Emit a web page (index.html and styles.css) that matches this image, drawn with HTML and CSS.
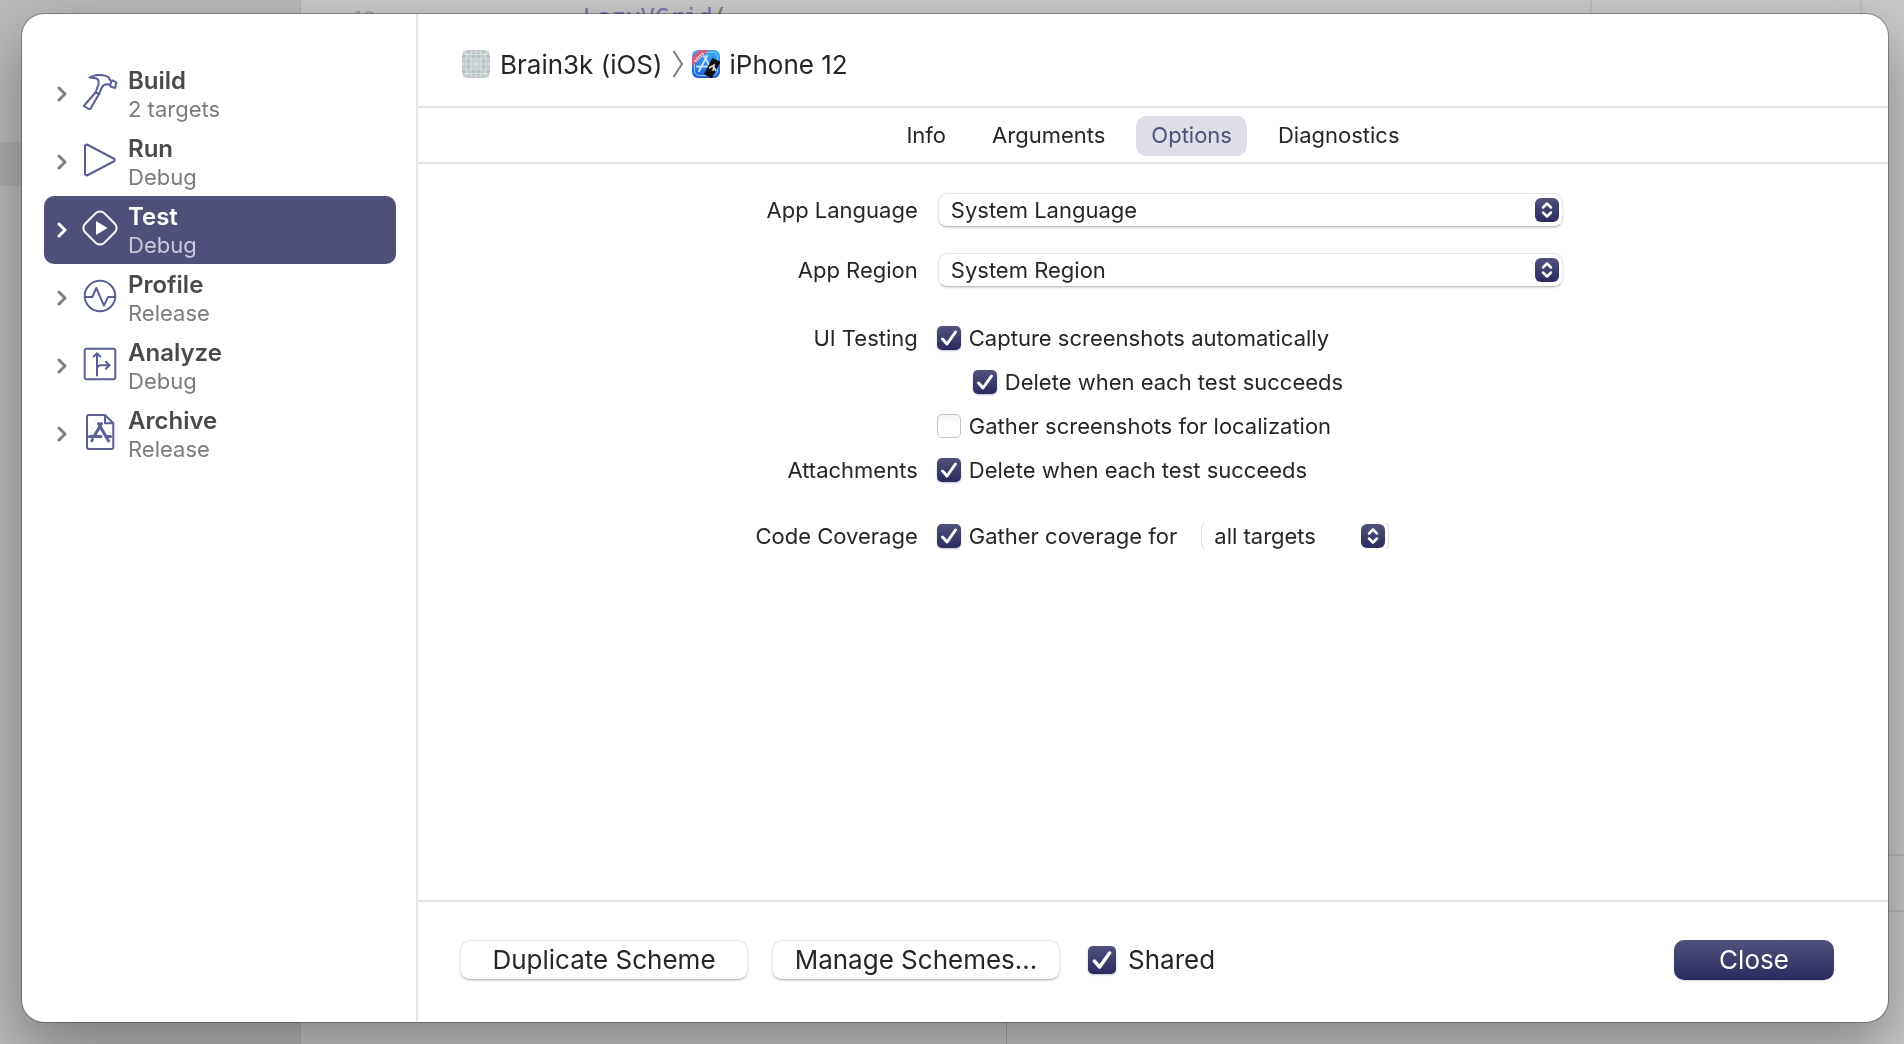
FILE: index.html
```html
<!DOCTYPE html>
<html lang="en">
<head>
<meta charset="utf-8">
<title>Edit Scheme</title>
<link rel="stylesheet" href="styles.css">
</head>
<body>
<div class="backdrop" aria-hidden="true">
  <div class="navigator"><div class="navigator-row"></div></div>
  <div class="editor"><span class="line-number">18</span><code class="code-line">LazyVGrid<span class="paren">(</span></code></div>
  <div class="gutter"></div>
  <div class="inspector"></div>
  <div class="debug-split"></div>
</div>

<main class="dialog">
  <nav class="sidebar" aria-label="Scheme actions">
    <a class="action" href="#build">
      <svg class="chevron" viewBox="0 0 12 16"><path d="M3 2l6 6-6 6"/></svg>
      <svg class="icon" viewBox="0 0 36 36"><path d="M7.5 3.5C13 0 22 0 27 3.5L27.500 5.500L29.500 7L31 6.500L34.500 8.500L33 14L28.500 12.500L27 10.500C24 10 21 11 19.800 13.500L17 20L8 35.500L1.800 32L13.500 18.500L15.500 13C17.500 9 17 5 13.500 4.200C11.500 3.500 9.500 3.800 7.500 3.500zM13.500 18.500L17.500 20M29.500 7L28 12"/></svg>
      <span class="action-text"><strong>Build</strong><small>2 targets</small></span>
    </a>
    <a class="action" href="#run">
      <svg class="chevron" viewBox="0 0 12 16"><path d="M3 2l6 6-6 6"/></svg>
      <svg class="icon" viewBox="0 0 36 36"><path d="M3 3.500L5 2.500L32.500 17L32.500 19L5 33.500L3 32.500z"/></svg>
      <span class="action-text"><strong>Run</strong><small>Debug</small></span>
    </a>
    <a class="action selected" href="#test" aria-current="true">
      <svg class="chevron" viewBox="0 0 12 16"><path d="M3 2l6 6-6 6"/></svg>
      <svg class="icon" viewBox="0 0 36 36"><rect x="4.500" y="4.500" width="27" height="27" rx="6" transform="rotate(45 18 18)"/><path class="solid" d="M14 11L25.500 18L14 25z"/></svg>
      <span class="action-text"><strong>Test</strong><small>Debug</small></span>
    </a>
    <a class="action" href="#profile">
      <svg class="chevron" viewBox="0 0 12 16"><path d="M3 2l6 6-6 6"/></svg>
      <svg class="icon" viewBox="0 0 36 36"><circle cx="18" cy="18" r="15.300"/><path d="M3 19H10.300L14.300 10L22 27.700L26 19H33"/></svg>
      <span class="action-text"><strong>Profile</strong><small>Release</small></span>
    </a>
    <a class="action" href="#analyze">
      <svg class="chevron" viewBox="0 0 12 16"><path d="M3 2l6 6-6 6"/></svg>
      <svg class="icon" viewBox="0 0 36 36"><rect x="2.700" y="2.700" width="30.600" height="30.600" rx="2"/><path d="M15 29.500V7.500M11.700 10.500L15 7.200L18.300 10.500M15 23C15.500 20 17 19.300 19 19.300H27.500M23.800 15.800L27.600 19.300L23.800 22.800"/></svg>
      <span class="action-text"><strong>Analyze</strong><small>Debug</small></span>
    </a>
    <a class="action" href="#archive">
      <svg class="chevron" viewBox="0 0 12 16"><path d="M3 2l6 6-6 6"/></svg>
      <svg class="icon" viewBox="0 0 36 36"><path d="M7 1H23L31.300 9.300V33Q31.300 35 29.300 35H7Q5 35 5 33V3Q5 1 7 1zM23 1V9.300H31.300"/><path class="thick" d="M16.500 9.500L18.500 13L26.500 27M19.500 9.500L12 22.500M10.500 25.500L9.800 26.800M7.500 22.500H19M24.500 22.500H28.500"/></svg>
      <span class="action-text"><strong>Archive</strong><small>Release</small></span>
    </a>
  </nav>

  <section class="content">
    <header class="breadcrumb">
      <svg class="app-icon" viewBox="0 0 28 28">
        <rect width="28" height="28" rx="6" fill="#b9c2c5"/>
        <g fill="none" stroke="#e2e8ea" stroke-width=".7"><path d="M14 0V28M0 14H28M4.500 0V28M23.500 0V28M0 4.500H28M0 23.500H28M9 0V28M19 0V28M0 9H28M0 19H28M1 1L27 27M27 1L1 27"/><circle cx="14" cy="14" r="12.500"/><circle cx="14" cy="14" r="5"/><circle cx="14" cy="14" r="2.500"/></g>
      </svg>
      <span class="crumb">Brain3k (iOS)</span>
      <svg class="crumb-sep" viewBox="0 0 12 28"><path d="M1.500 1L10 14L1.500 27"/></svg>
      <svg class="app-icon" viewBox="0 0 28 28">
        <defs><linearGradient id="sim" x1="0" y1="0" x2="0" y2="1"><stop offset="0" stop-color="#38b0f0"/><stop offset="1" stop-color="#2458e0"/></linearGradient><clipPath id="sim-clip"><rect width="28" height="28" rx="6"/></clipPath></defs>
        <rect width="28" height="28" rx="6" fill="url(#sim)"/>
        <rect x="2.500" y="2.500" width="23" height="23" rx="4.500" fill="none" stroke="#8cc8f8"/>
        <path d="M15 6L7 21M12 6L19 18M5 16.500H18" fill="none" stroke="#c6e2ff" stroke-width="2" stroke-linecap="round"/>
        <g clip-path="url(#sim-clip)"><path d="M0 7L7 0H17L0 16z" fill="#d95b83"/><path d="M3 11.500L11.500 3" stroke="#f7d3df" stroke-width="3" stroke-dasharray="1.500 1"/></g>
        <path d="M20.500 8.500L28 12L19.500 28L12.500 24z" fill="#111" stroke="#111" stroke-linejoin="round"/>
        <path d="M17 18L22 15L21 21M21 15.500L24 21" fill="none" stroke="#d5d9df" stroke-width="1.600"/>
      </svg>
      <span class="crumb">iPhone 12</span>
    </header>

    <div class="tabs" role="tablist">
      <button class="tab" type="button" role="tab">Info</button>
      <button class="tab" type="button" role="tab">Arguments</button>
      <button class="tab active" type="button" role="tab" aria-selected="true">Options</button>
      <button class="tab" type="button" role="tab">Diagnostics</button>
    </div>

    <form class="options">
      <div class="row row-select">
        <label class="row-label" for="language">App Language</label>
        <span class="popup">
          <select id="language"><option>System Language</option></select>
          <svg class="stepper" viewBox="0 0 24 24"><path d="M8 9.500L12 5.500L16 9.500M8 14.500L12 18.500L16 14.500"/></svg>
        </span>
      </div>
      <div class="row row-select">
        <label class="row-label" for="region">App Region</label>
        <span class="popup">
          <select id="region"><option>System Region</option></select>
          <svg class="stepper" viewBox="0 0 24 24"><path d="M8 9.500L12 5.500L16 9.500M8 14.500L12 18.500L16 14.500"/></svg>
        </span>
      </div>
      <div class="row row-checks" role="group" aria-labelledby="ui-testing">
        <span class="row-label" id="ui-testing">UI Testing</span>
        <div class="checks">
          <label class="check"><input type="checkbox" checked>Capture screenshots automatically</label>
          <label class="check nested"><input type="checkbox" checked>Delete when each test succeeds</label>
          <label class="check"><input type="checkbox">Gather screenshots for localization</label>
        </div>
      </div>
      <div class="row row-checks" role="group" aria-labelledby="attachments">
        <span class="row-label" id="attachments">Attachments</span>
        <label class="check"><input type="checkbox" checked>Delete when each test succeeds</label>
      </div>
      <div class="row row-coverage" role="group" aria-labelledby="coverage">
        <span class="row-label" id="coverage">Code Coverage</span>
        <div class="coverage">
          <label class="check"><input type="checkbox" checked>Gather coverage for</label>
          <span class="popup popup-small">
            <select aria-label="Coverage targets"><option>all targets</option></select>
            <svg class="stepper" viewBox="0 0 24 24"><path d="M8 9.500L12 5.500L16 9.500M8 14.500L12 18.500L16 14.500"/></svg>
          </span>
        </div>
      </div>
    </form>

    <footer class="footer">
      <button class="button" type="button">Duplicate Scheme</button>
      <button class="button" type="button">Manage Schemes...</button>
      <label class="check shared"><input type="checkbox" checked>Shared</label>
      <button class="button primary" type="button">Close</button>
    </footer>
  </section>
</main>
</body>
</html>
```
FILE: styles.css
```css
*, *::before, *::after { box-sizing: border-box; }

:root {
  --accent: #4f5079;
  --accent-line: #5a5f98;
  --text: #262626;
  --line: #e4e4e4;
  --accent-fill: linear-gradient(#51517c, #2b2b60);
}

body {
  margin: 0;
  min-height: 100vh;
  display: flex;
  padding: 14px 16px 22px 22px;
  background: #c8c8c8;
  color: var(--text);
  font: 22px/28px Inter, "Liberation Sans", sans-serif;
  overflow: hidden;
}

/* Dimmed editor window behind the sheet */
.backdrop {
  position: fixed;
  inset: 0;
  background: #c8c8c8;
}
.navigator {
  position: absolute;
  inset: 0 auto 0 0;
  width: 301px;
  padding-top: 142px;
  background: #bababa;
  border-right: 2px solid #b6b6b6;
}
.navigator-row { height: 44px; background: #adadad; }
.editor {
  position: absolute;
  inset: 0 0 auto 301px;
  display: flex;
  gap: 208px;
  padding-left: 52px;
}
.line-number, .code-line { font: 24px/36px "DejaVu Sans Mono", monospace; }
.line-number { font-size: 18px; color: #a0a0a0; }
.code-line { color: #7d72b0; }
.paren { color: #707070; }
.gutter {
  position: absolute;
  inset: 0 42px auto auto;
  width: 272px;
  height: 14px;
  border: solid #bcbcbc;
  border-width: 0 2px;
}
.inspector {
  position: absolute;
  right: 0;
  top: 854px;
  width: 16px;
  height: 58px;
  border: solid #b8b8b8;
  border-width: 2px 0;
}
.debug-split {
  position: absolute;
  left: 1006px;
  bottom: 0;
  width: 1px;
  height: 22px;
  background: #a8a8a8;
}

.dialog {
  position: relative;
  flex: 1;
  display: flex;
  background: #fff;
  border-radius: 22px;
  box-shadow: 0 0 0 1px rgba(0, 0, 0, .3), 0 24px 60px rgba(0, 0, 0, .35);
}

.sidebar {
  width: 396px;
  padding: 46px 20px 0 22px;
  border-right: 2px solid var(--line);
}
.action {
  display: flex;
  align-items: center;
  height: 68px;
  padding: 0 12px;
  border-radius: 10px;
  color: #4a4a4a;
  text-decoration: none;
}
.chevron {
  width: 12px;
  height: 16px;
  margin-right: 14px;
  fill: none;
  stroke: #808080;
  stroke-width: 3;
  stroke-linecap: round;
  stroke-linejoin: round;
}
.icon {
  width: 36px;
  height: 36px;
  margin: 0 10px 4px 0;
  fill: none;
  stroke: var(--accent-line);
  stroke-width: 2;
  stroke-linejoin: round;
  stroke-linecap: round;
}
.icon .solid { fill: #fff; stroke: none; }
.icon .thick { stroke-width: 3; }
.action-text { display: grid; padding-top: 2px; line-height: 29px; }
.action-text strong { font-size: 24px; font-weight: 600; }
.action-text small { font-size: 22px; color: #7c7c7c; }
.action.selected { background: var(--accent); color: #fff; }
.selected .chevron, .selected .icon { stroke: #fff; }
.selected .action-text small { color: #c8c8d8; }

.content { flex: 1; display: flex; flex-direction: column; }

.breadcrumb {
  display: flex;
  align-items: center;
  height: 94px;
  padding: 8px 44px 0;
  border-bottom: 2px solid var(--line);
  font-size: 26px;
}
.crumb { padding-top: 2px; }
.app-icon { width: 28px; height: 28px; margin-right: 10px; }
.crumb-sep {
  width: 12px;
  height: 28px;
  margin: 0 8px 0 9px;
  fill: none;
  stroke: #7c7c7c;
  stroke-width: 2;
}

.tabs {
  display: flex;
  justify-content: center;
  gap: 16px;
  padding: 8px 0 6px;
  border-bottom: 2px solid var(--line);
}
.tab {
  height: 40px;
  padding: 0 15px 2px;
  border: 0;
  border-radius: 10px;
  background: none;
  color: inherit;
  font: inherit;
}
.tab.active { background: #dedee7; color: var(--accent); }

.options { flex: 1; padding-top: 29px; }
.row {
  display: grid;
  grid-template-columns: 34% 1fr;
  column-gap: 19px;
}
.row-label { text-align: right; }
.row-select { align-items: center; margin-bottom: 26px; column-gap: 20px; }
.row-checks { margin-bottom: 16px; }
.row-select + .row-checks { margin-top: 37px; }
.row-coverage { align-items: center; margin-top: 36px; }
.checks { display: grid; gap: 16px; }
.nested { margin-left: 36px; }
.coverage { display: flex; align-items: center; gap: 24px; }

.check { display: flex; align-items: center; gap: 8px; }
.check input {
  appearance: none;
  width: 24px;
  height: 24px;
  margin: 0;
  border: 1px solid #c4c4c4;
  border-radius: 5px;
  background: linear-gradient(#f4f4f4, #fff 40%);
}
.check input:checked {
  border: 0;
  background:
    url("data:image/svg+xml,%3Csvg xmlns='http://www.w3.org/2000/svg' viewBox='0 0 24 24'%3E%3Cpath d='M5.500 13L10 18L18.500 6' fill='none' stroke='white' stroke-width='3' stroke-linecap='round' stroke-linejoin='round'/%3E%3C/svg%3E"),
    var(--accent-fill);
  box-shadow: 0 1px 2px rgba(43, 43, 96, .3);
}

.popup { position: relative; display: block; max-width: 625px; }
.popup select {
  appearance: none;
  display: block;
  width: 100%;
  height: 34px;
  padding: 0 40px 0 12px;
  border: 1px solid #e6e6e6;
  border-bottom-color: #c0c0c0;
  border-radius: 9px;
  background: #fff;
  box-shadow: 0 1px 2px rgba(0, 0, 0, .15);
  color: inherit;
  font: inherit;
}
.popup-small { width: 188px; }
.popup-small select {
  height: 32px;
  border-color: #fff #dcdcdc;
  box-shadow: none;
}
.stepper {
  position: absolute;
  top: 50%;
  right: 4px;
  width: 24px;
  height: 24px;
  margin-top: -12px;
  border-radius: 6px;
  background: var(--accent-fill);
  fill: none;
  stroke: #fff;
  stroke-width: 2.5;
  stroke-linecap: round;
  stroke-linejoin: round;
  pointer-events: none;
}

.footer {
  display: flex;
  align-items: center;
  gap: 24px;
  padding: 38px 54px 42px 42px;
  border-top: 2px solid var(--line);
  font-size: 26px;
}
.button {
  width: 288px;
  height: 40px;
  padding: 0;
  border: 1px solid #e6e6e6;
  border-bottom-color: #c0c0c0;
  border-radius: 10px;
  background: #fff;
  box-shadow: 0 1px 2px rgba(0, 0, 0, .15);
  color: inherit;
  font: inherit;
}
.primary {
  width: 160px;
  margin-left: auto;
  border: 0;
  background: var(--accent-fill);
  color: #fff;
}
.shared { gap: 12px; margin-left: 4px; }
.shared input { width: 28px; height: 28px; }
```
